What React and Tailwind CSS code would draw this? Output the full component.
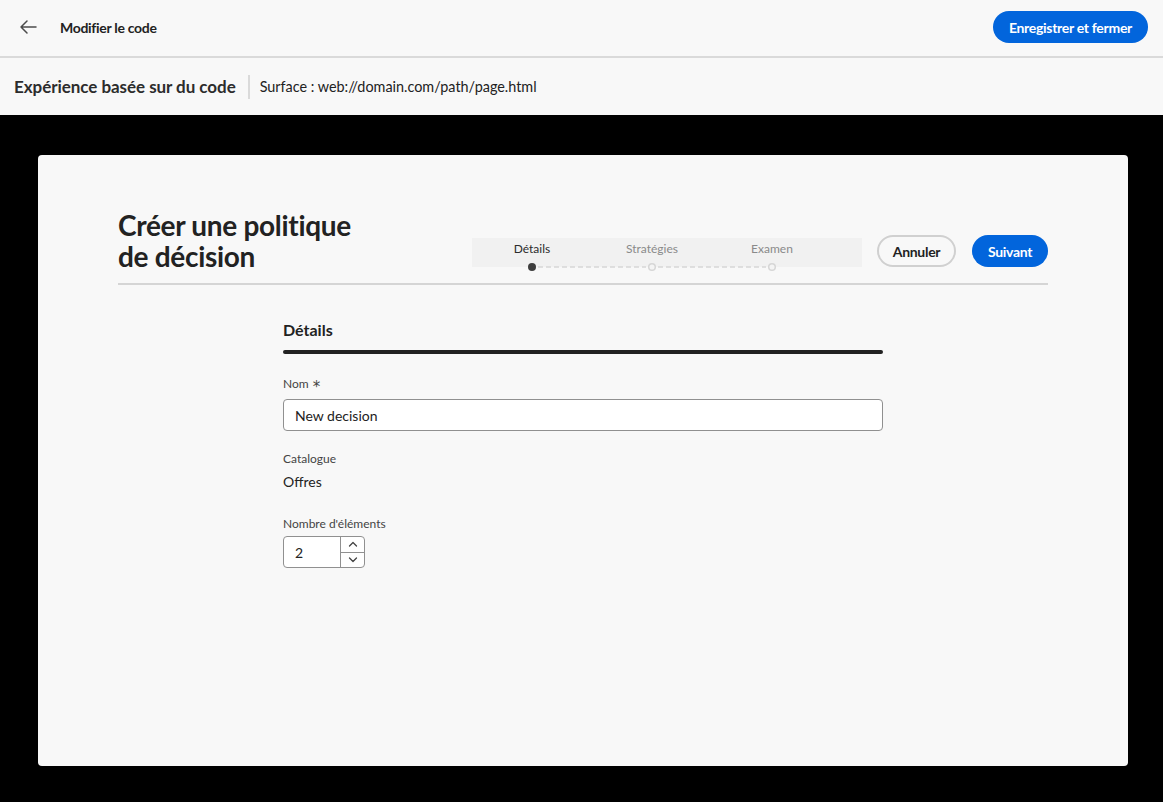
import React from "react";

const font = { fontFamily: "Lato, 'Noto Sans', sans-serif" };

function Stepper() {
  return (
    <div className="relative w-[390px] h-[29px] bg-[#f1f1f1] mt-[3px]">
      <div className="flex pt-[3px]">
        <div className="w-[120px] text-center text-[12px] leading-[16px] text-[#2c2c2c]">Détails</div>
        <div className="w-[120px] text-center text-[12px] leading-[16px] text-[#8a8a8a]">Stratégies</div>
        <div className="w-[120px] text-center text-[12px] leading-[16px] text-[#8a8a8a]">Examen</div>
      </div>
      <svg className="absolute left-0 top-[23px]" width="390" height="12" viewBox="0 0 390 12">
        <line x1="66" y1="6" x2="174" y2="6" stroke="#d6d6d6" strokeWidth="1.5" strokeDasharray="5 3" />
        <line x1="186" y1="6" x2="294" y2="6" stroke="#d6d6d6" strokeWidth="1.5" strokeDasharray="5 3" />
        <circle cx="60" cy="6" r="4" fill="#3e3e3e" />
        <circle cx="180" cy="6" r="3.3" fill="#f4f4f4" stroke="#d6d6d6" strokeWidth="1.5" />
        <circle cx="300" cy="6" r="3.3" fill="#f4f4f4" stroke="#d6d6d6" strokeWidth="1.5" />
      </svg>
    </div>
  );
}

export default function App() {
  return (
    <div className="w-[1163px] h-[802px] bg-black flex flex-col overflow-hidden" style={font}>
      {/* top bar */}
      <div className="h-[58px] bg-[#f8f8f8] border-b-2 border-[#dadada] flex items-start justify-between pl-[18px] pr-[15px] pt-[11px] shrink-0">
        <div className="flex items-center h-[32px]">
          <svg width="20" height="20" viewBox="0 0 20 20" className="text-[#4b4b4b]">
            <path d="M18 10H3M9 4L3 10L9 16" fill="none" stroke="currentColor" strokeWidth="1.5" strokeLinecap="round" strokeLinejoin="round" />
          </svg>
          <span className="ml-[22px] text-[14px] font-bold text-[#222] tracking-[-0.3px]">Modifier le code</span>
        </div>
        <button className="h-[32px] px-[16px] rounded-full bg-[#0265dc] text-white text-[14px] font-bold tracking-[-0.3px]">Enregistrer et fermer</button>
      </div>
      {/* second bar */}
      <div className="h-[57px] bg-[#f8f8f8] flex items-center pl-[14px] shrink-0">
        <span className="text-[17px] font-bold text-[#2c2c2c] tracking-[-0.05px]">Expérience basée sur du code</span>
        <div className="w-[2px] h-[24px] bg-[#dadada] ml-[12px] mr-[10px]" />
        <span className="text-[14.4px] text-[#222]">Surface : web://domain.com/path/page.html</span>
      </div>
      {/* black area */}
      <div className="flex-1 pt-[40px] pb-[36px] pl-[38px] pr-[35px] flex">
        <div className="flex-1 bg-[#f8f8f8] rounded-[4px] flex flex-col px-[80px] pt-[55px]">
          <div className="flex items-start border-b-2 border-[#d5d5d5] pb-[11px]">
            <h1 className="text-[28px] leading-[31px] font-bold text-[#222] tracking-[-0.3px]">
              Créer une politique
              <br />
              de décision
            </h1>
            <div className="ml-auto flex items-start mt-[25px]">
              <Stepper />
              <div className="flex items-center ml-[15px] gap-[16px]">
                <button className="h-[32px] w-[79px] rounded-full border-2 border-[#d0d0d0] text-[14px] font-bold text-[#222] tracking-[-0.3px]">Annuler</button>
                <button className="h-[32px] w-[76px] rounded-full bg-[#0265dc] text-white text-[14px] font-bold tracking-[-0.3px]">Suivant</button>
              </div>
            </div>
          </div>
          <div className="w-[600px] self-center mt-[35px] flex flex-col">
            <div className="text-[16px] font-bold text-[#222] leading-[20px]">Détails</div>
            <div className="h-[4px] rounded-full bg-[#222] mt-[10px]" />
            <div className="mt-[22px] text-[12px] leading-[16px] text-[#444] flex items-center">
              Nom
              <span className="ml-[4px] text-[15px] leading-[16px] inline-block translate-y-[3px]" style={{ fontFamily: "'DejaVu Sans', sans-serif" }}>*</span>
            </div>
            <div className="mt-[7px] h-[32px] bg-white border border-[#909090] rounded-[4px] flex items-center px-[11px] text-[14px] text-[#222]">New decision</div>
            <div className="mt-[20px] text-[12px] leading-[16px] text-[#444]">Catalogue</div>
            <div className="mt-[6px] text-[14px] leading-[18px] text-[#222]">Offres</div>
            <div className="mt-[25px] text-[12px] leading-[16px] text-[#444]">Nombre d'éléments</div>
            <div className="mt-[4px] w-[82px] h-[32px] bg-white border border-[#909090] rounded-[4px] flex">
              <div className="flex-1 flex items-center pl-[11px] text-[14px] text-[#222]">2</div>
              <div className="w-[24px] border-l border-[#909090] flex flex-col">
                <div className="flex-1 flex items-center justify-center border-b border-[#909090]">
                  <svg width="10" height="6" viewBox="0 0 10 6"><path d="M1.5 5L5 1.5L8.5 5" fill="none" stroke="#444" strokeWidth="1.3" strokeLinecap="round" strokeLinejoin="round" /></svg>
                </div>
                <div className="flex-1 flex items-center justify-center">
                  <svg width="10" height="6" viewBox="0 0 10 6"><path d="M1.5 1L5 4.5L8.5 1" fill="none" stroke="#444" strokeWidth="1.3" strokeLinecap="round" strokeLinejoin="round" /></svg>
                </div>
              </div>
            </div>
          </div>
        </div>
      </div>
    </div>
  );
}
